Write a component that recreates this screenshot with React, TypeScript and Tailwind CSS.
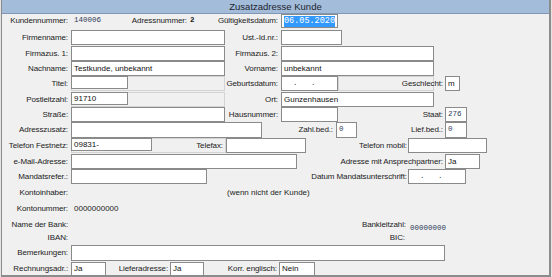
import React from "react";

// Kundendialog "Zusatzadresse Kunde" – nachgebaut im Stil eines alten Windows-Formulars

const SANS = "font-['Liberation_Sans',Arial,sans-serif]";
const MONO = "font-['Liberation_Mono','Courier_New',monospace]";

type P = { w: string; children?: React.ReactNode; className?: string };

// Beschriftung, rechtsbündig vor dem Feld
function Lbl({ w, children, className = "pr-[3px]" }: P) {
  return (
    <div
      className={`flex h-full shrink-0 items-center justify-end whitespace-nowrap text-[8px] leading-none tracking-[-0.1px] text-[#1b1b1b] ${w} ${className}`}
    >
      {children}
    </div>
  );
}

// Eingabefeld (weiß mit grauem Rand)
function Box({ w, children, className = "" }: P) {
  return (
    <div
      className={`flex h-full shrink-0 items-center overflow-hidden whitespace-nowrap border border-[#8a8a8a] bg-white pl-[2px] text-[8px] leading-none text-[#111] ${w} ${className}`}
    >
      {children}
    </div>
  );
}

function Mono({ children }: { children: React.ReactNode }) {
  return <span className={`${MONO} whitespace-pre text-[7.5px] text-[#2d3b58]`}>{children}</span>;
}

export default function App() {
  return (
    <div className={`h-[277px] w-[552px] overflow-hidden bg-[#e4e4e4] pl-[1px] ${SANS}`}>
      <div className="flex h-[277px] w-[550px] flex-col border-b-2 border-l border-r-2 border-[#8c8c8c] bg-[#f0f0f0]">
        {/* Titelleiste */}
        <div className="flex h-[14px] shrink-0 items-center justify-center border-b border-[#8197b3] bg-[#a2bcd9] text-[9.5px] leading-none text-[#1d2430]">
          Zusatzadresse Kunde
        </div>

        <div className="flex flex-col">
          {/* Kopfzeile */}
          <div className="flex h-[16px] items-start">
            <div className="flex h-[14px] items-center">
              <Lbl w="w-[69px]">Kundennummer:</Lbl>
              <div className="flex h-full w-[59px] items-center pl-[3px]">
                <Mono>140006</Mono>
              </div>
              <Lbl w="w-[58px]" className="pr-[1px]">
                Adressnummer:
              </Lbl>
              <div className="flex h-full w-[9px] items-center pl-[2px]">
                <span className={`${MONO} text-[7.5px] font-bold text-[#222]`}>2</span>
              </div>
              <Lbl w="w-[84px]">Gültigkeitsdatum:</Lbl>
              <Box w="w-[57px]" className="pl-[1px]">
                <span className={`${MONO} bg-[#3399ff] text-[8.5px] leading-[11px] text-white`}>
                  06.05.2020
                </span>
              </Box>
            </div>
          </div>

          <div className="flex h-[15px] items-center">
            <Lbl w="w-[69px]">Firmenname:</Lbl>
            <Box w="w-[154px]" />
            <Lbl w="w-[56px]">Ust.-Id.nr.:</Lbl>
            <Box w="w-[61px]" />
          </div>

          <div className="mt-[1px] flex h-[15px] items-center">
            <Lbl w="w-[69px]">Firmazus. 1:</Lbl>
            <Box w="w-[154px]" />
            <Lbl w="w-[56px]">Firmazus. 2:</Lbl>
            <Box w="w-[153px]" />
          </div>

          <div className="flex h-[15px] items-center">
            <Lbl w="w-[69px]">Nachname:</Lbl>
            <Box w="w-[154px]">Testkunde, unbekannt</Box>
            <Lbl w="w-[56px]">Vorname:</Lbl>
            <Box w="w-[153px]">unbekannt</Box>
          </div>

          <div className="flex h-[15px] items-center">
            <Lbl w="w-[69px]">Titel:</Lbl>
            <div className="flex h-full w-[154px] border border-[#d3d3d3]">
              <Box w="w-[57px]" className="-my-px -ml-px h-[15px]" />
            </div>
            <Lbl w="w-[56px]">Geburtsdatum:</Lbl>
            <Box w="w-[57px]">
              <Mono>{"  .   ."}</Mono>
            </Box>
            <div className="relative h-full w-[107px] shrink-0">
              <div className="absolute left-0 top-0 h-full w-[96px] border border-[#d3d3d3]" />
              <Lbl w="w-[107px]" className="relative pr-[2px]">
                Geschlecht:
              </Lbl>
            </div>
            <Box w="w-[15px]">m</Box>
          </div>

          <div className="mt-[1px] flex h-[15px] items-center">
            <Lbl w="w-[69px]">Postleitzahl:</Lbl>
            <div className="flex h-full w-[154px] border border-[#d3d3d3]">
              <Box w="w-[57px]" className="-my-px -ml-px h-[15px]">
                91710
              </Box>
            </div>
            <Lbl w="w-[56px]">Ort:</Lbl>
            <Box w="w-[153px]">Gunzenhausen</Box>
          </div>

          <div className="flex h-[15px] items-center">
            <Lbl w="w-[69px]">Straße:</Lbl>
            <Box w="w-[154px]" />
            <Lbl w="w-[56px]">Hausnummer:</Lbl>
            <Box w="w-[57px]" />
            <Lbl w="w-[107px]" className="pr-[2px]">
              Staat:
            </Lbl>
            <Box w="w-[22px]">
              <Mono>276</Mono>
            </Box>
          </div>

          <div className="flex h-[16px] items-center">
            <Lbl w="w-[69px]">Adresszusatz:</Lbl>
            <Box w="w-[191px]" />
            <Lbl w="w-[74px]">Zahl.bed.:</Lbl>
            <Box w="w-[21px]">
              <Mono>0</Mono>
            </Box>
            <Lbl w="w-[88px]" className="pr-[2px]">
              Lief.bed.:
            </Lbl>
            <Box w="w-[22px]">
              <Mono>0</Mono>
            </Box>
          </div>

          <div className="flex h-[15px] items-center">
            <Lbl w="w-[69px]">Telefon Festnetz:</Lbl>
            <div className="flex h-full w-[155px] border border-[#d3d3d3]">
              <Box w="w-[81px]" className="-my-px -ml-px h-[15px]">
                09831-
              </Box>
              <Lbl w="flex-1" className="pr-[2px]">
                Telefax:
              </Lbl>
            </div>
            <Box w="w-[80px]" />
            <Lbl w="w-[102px]" className="pr-[1px]">
              Telefon mobil:
            </Lbl>
            <Box w="w-[79px]" />
          </div>

          <div className="mt-[1px] flex h-[15px] items-center">
            <Lbl w="w-[69px]">e-Mail-Adresse:</Lbl>
            <Box w="w-[226px]" />
            <Lbl w="w-[148px]" className="pr-[2px]">
              Adresse mit Ansprechpartner:
            </Lbl>
            <Box w="w-[35px]">Ja</Box>
          </div>

          <div className="flex h-[15px] items-center">
            <Lbl w="w-[69px]">Mandatsrefer.:</Lbl>
            <Box w="w-[136px]" />
            <Lbl w="w-[201px]" className="pr-[1px]">
              Datum Mandatsunterschrift:
            </Lbl>
            <Box w="w-[58px]">
              <Mono>{"  .   ."}</Mono>
            </Box>
          </div>

          {/* Bankdaten */}
          <div className="flex h-[17px] items-center">
            <Lbl w="w-[69px]">Kontoinhaber:</Lbl>
            <span className="pl-[156px] text-[8px] leading-none text-[#1b1b1b]">(wenn nicht der Kunde)</span>
          </div>

          <div className="flex h-[16px] items-center">
            <Lbl w="w-[69px]">Kontonummer:</Lbl>
            <span className="pl-[3px] text-[8px] leading-none text-[#1b1b1b]">0000000000</span>
          </div>

          <div className="flex h-[15px] items-center">
            <Lbl w="w-[69px]">Name der Bank:</Lbl>
            <Lbl w="w-[337px]" className="pr-[2px]">
              Bankleitzahl:
            </Lbl>
            <span className="pl-[2px]">
              <Mono>00000000</Mono>
            </span>
          </div>

          <div className="flex h-[13px] items-end pb-[1px]">
            <Lbl w="w-[69px]">IBAN:</Lbl>
            <Lbl w="w-[337px]" className="pr-[3px]">
              BIC:
            </Lbl>
          </div>

          <div className="flex h-[16px] items-center">
            <Lbl w="w-[69px]">Bemerkungen:</Lbl>
            <Box w="w-[374px]" />
          </div>

          <div className="mt-[1px] flex h-[14px] items-center">
            <Lbl w="w-[69px]">Rechnungsadr.:</Lbl>
            <Box w="w-[35px]">Ja</Box>
            <Lbl w="w-[64px]" className="pr-[2px]">
              Lieferadresse:
            </Lbl>
            <Box w="w-[34px]">Ja</Box>
            <Lbl w="w-[75px]" className="pr-[2px]">
              Korr. englisch:
            </Lbl>
            <Box w="w-[36px]">Nein</Box>
          </div>
        </div>
      </div>
    </div>
  );
}
